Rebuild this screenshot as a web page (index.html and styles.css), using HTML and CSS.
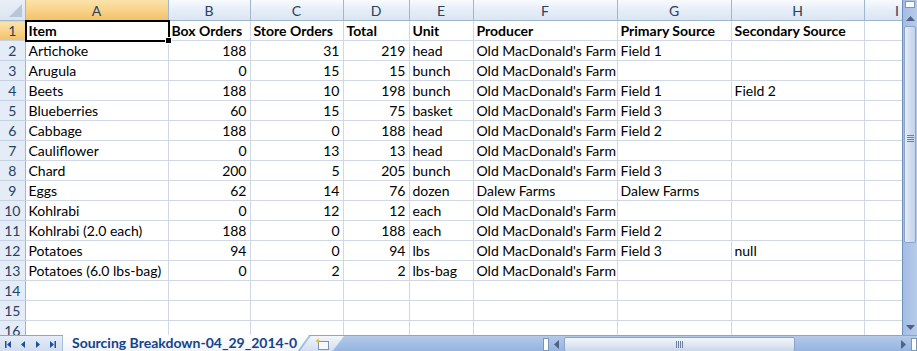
FILE: index.html
```html
<!DOCTYPE html>
<html lang="en">
<head>
    <meta charset="UTF-8">
    <title>Sourcing Breakdown</title>
    <link rel="stylesheet" href="styles.css">
</head>
<body>
    <div class="window">
        <div class="main">
            <div class="sheet">
                <table class="grid">
                    <colgroup>
                        <col class="c-row"><col class="c-a"><col class="c-b"><col class="c-c"><col class="c-d">
                        <col class="c-e"><col class="c-f"><col class="c-g"><col class="c-h"><col class="c-i">
                    </colgroup>
                    <thead>
                        <tr>
                            <th class="corner"><span class="tri"></span></th>
                            <th class="sel">A</th><th>B</th><th>C</th><th>D</th><th>E</th><th>F</th><th>G</th><th>H</th><th class="cut">I</th>
                        </tr>
                    </thead>
                    <tbody>
                        <tr class="bold"><th class="sel">1</th><td class="active">Item<span class="handle"></span></td><td>Box Orders</td><td>Store Orders</td><td>Total</td><td>Unit</td><td>Producer</td><td>Primary Source</td><td>Secondary Source</td><td></td></tr>
                        <tr><th>2</th><td>Artichoke</td><td class="n">188</td><td class="n">31</td><td class="n">219</td><td>head</td><td>Old MacDonald's Farm</td><td>Field 1</td><td></td><td></td></tr>
                        <tr><th>3</th><td>Arugula</td><td class="n">0</td><td class="n">15</td><td class="n">15</td><td>bunch</td><td>Old MacDonald's Farm</td><td></td><td></td><td></td></tr>
                        <tr><th>4</th><td>Beets</td><td class="n">188</td><td class="n">10</td><td class="n">198</td><td>bunch</td><td>Old MacDonald's Farm</td><td>Field 1</td><td>Field 2</td><td></td></tr>
                        <tr><th>5</th><td>Blueberries</td><td class="n">60</td><td class="n">15</td><td class="n">75</td><td>basket</td><td>Old MacDonald's Farm</td><td>Field 3</td><td></td><td></td></tr>
                        <tr><th>6</th><td>Cabbage</td><td class="n">188</td><td class="n">0</td><td class="n">188</td><td>head</td><td>Old MacDonald's Farm</td><td>Field 2</td><td></td><td></td></tr>
                        <tr><th>7</th><td>Cauliflower</td><td class="n">0</td><td class="n">13</td><td class="n">13</td><td>head</td><td>Old MacDonald's Farm</td><td></td><td></td><td></td></tr>
                        <tr><th>8</th><td>Chard</td><td class="n">200</td><td class="n">5</td><td class="n">205</td><td>bunch</td><td>Old MacDonald's Farm</td><td>Field 3</td><td></td><td></td></tr>
                        <tr><th>9</th><td>Eggs</td><td class="n">62</td><td class="n">14</td><td class="n">76</td><td>dozen</td><td>Dalew Farms</td><td>Dalew Farms</td><td></td><td></td></tr>
                        <tr><th>10</th><td>Kohlrabi</td><td class="n">0</td><td class="n">12</td><td class="n">12</td><td>each</td><td>Old MacDonald's Farm</td><td></td><td></td><td></td></tr>
                        <tr><th>11</th><td>Kohlrabi (2.0 each)</td><td class="n">188</td><td class="n">0</td><td class="n">188</td><td>each</td><td>Old MacDonald's Farm</td><td>Field 2</td><td></td><td></td></tr>
                        <tr><th>12</th><td>Potatoes</td><td class="n">94</td><td class="n">0</td><td class="n">94</td><td>lbs</td><td>Old MacDonald's Farm</td><td>Field 3</td><td>null</td><td></td></tr>
                        <tr><th>13</th><td>Potatoes (6.0 lbs-bag)</td><td class="n">0</td><td class="n">2</td><td class="n">2</td><td>lbs-bag</td><td>Old MacDonald's Farm</td><td></td><td></td><td></td></tr>
                        <tr><th>14</th><td></td><td></td><td></td><td></td><td></td><td></td><td></td><td></td><td></td></tr>
                        <tr><th>15</th><td></td><td></td><td></td><td></td><td></td><td></td><td></td><td></td><td></td></tr>
                        <tr><th>16</th><td></td><td></td><td></td><td></td><td></td><td></td><td></td><td></td><td></td></tr>
                    </tbody>
                </table>
            </div>
            <div class="vscroll">
                <div class="split-v"></div>
                <div class="sbtn"><svg width="9" height="5" viewBox="0 0 9 5"><path d="M0 5 L4.5 0 L9 5 Z" fill="#4f6283"/></svg></div>
                <div class="vthumb"><span class="grip-v"></span></div>
                <div class="vtrack"></div>
                <div class="sbtn"><svg width="9" height="5" viewBox="0 0 9 5"><path d="M0 0 L4.5 5 L9 0 Z" fill="#4f6283"/></svg></div>
            </div>
        </div>
        <div class="tabbar">
            <div class="nav">
                <svg width="60" height="16" viewBox="0 0 60 16">
                    <rect x="5" y="5" width="1.5" height="7" fill="#1f4e9c"/>
                    <path d="M11 5 L7 8.5 L11 12 Z" fill="#1f4e9c"/>
                    <path d="M25 5 L21 8.5 L25 12 Z" fill="#1f4e9c"/>
                    <path d="M36 5 L40 8.5 L36 12 Z" fill="#1f4e9c"/>
                    <path d="M50 5 L54 8.5 L50 12 Z" fill="#1f4e9c"/>
                    <rect x="54.5" y="5" width="1.5" height="7" fill="#1f4e9c"/>
                </svg>
            </div>
            <div class="tab">Sourcing Breakdown-04_29_2014-0</div>
            <div class="newtab">
                <svg width="18" height="14" viewBox="0 0 18 14">
                    <rect x="5.5" y="4.5" width="10" height="8" fill="#f4f7fb" stroke="#7f93b1"/>
                    <path d="M5 1 L5.8 3.2 L8 4 L5.8 4.8 L5 7 L4.2 4.8 L2 4 L4.2 3.2 Z" fill="#f2b31a"/>
                </svg>
            </div>
            <div class="hbar">
                <div class="split-h"></div>
                <div class="hbtn"><svg width="5" height="9" viewBox="0 0 5 9"><path d="M5 0 L0 4.5 L5 9 Z" fill="#4f6283"/></svg></div>
                <div class="hthumb"><span class="grip-h"></span></div>
                <div class="htrack"></div>
                <div class="hbtn"><svg width="5" height="9" viewBox="0 0 5 9"><path d="M0 0 L5 4.5 L0 9 Z" fill="#4f6283"/></svg></div>
                <div class="split-h"></div>
            </div>
        </div>
    </div>
</body>
</html>
```
FILE: styles.css
```css
body {
    margin: 0;
    padding: 0;
    background-color: #fff;
    font-family: Lato, "Open Sans", sans-serif;
    color: #000;
}

.window {
    width: 917px;
    height: 351px;
    display: flex;
    flex-direction: column;
    overflow: hidden;
}

.main {
    height: 335px;
    display: flex;
}

.sheet {
    width: 902px;
    overflow: hidden;
}

.grid {
    border-collapse: collapse;
    table-layout: fixed;
    width: 902px;
    font-size: 14px;
}

.c-row { width: 25px; }
.c-a { width: 143px; }
.c-b { width: 82px; }
.c-c { width: 93px; }
.c-d { width: 66px; }
.c-e { width: 64px; }
.c-f { width: 144px; }
.c-g { width: 114px; }
.c-h { width: 133px; }
.c-i { width: 38px; }

.grid th {
    font-weight: normal;
    color: #27415f;
    font-size: 14px;
    padding: 0;
    border: 1px solid #9eb6ce;
}

.grid thead th {
    height: 20px;
    background: linear-gradient(#f8fafd, #e4ecf7 55%, #dbe5f1);
    border-top: none;
    text-align: center;
}

.grid thead th.cut {
    border-right: none;
    text-align: right;
    padding-right: 3px;
}

.grid thead th.sel {
    background: linear-gradient(#fbe3a9, #f8d38a 50%, #f3c16a);
    border-color: #f2b45f #9eb6ce #f2a13b #9eb6ce;
}

.grid .corner {
    position: relative;
    background: linear-gradient(#e9eff7, #dbe5f1);
    border-left: none;
}

.tri {
    position: absolute;
    right: 3px;
    bottom: 3px;
    width: 0;
    height: 0;
    border-left: 13px solid transparent;
    border-bottom: 13px solid #b9c6d8;
}

.grid tbody th {
    height: 19px;
    background-color: #e4ecf7;
    border-left: none;
    border-bottom-color: #c5d2e3;
    border-right-color: #9eb6ce;
    text-align: center;
}

.grid tbody th.sel {
    background: linear-gradient(#fbe3a9, #f8d38a 50%, #f3c16a);
    border-right-color: #f2a13b;
}

.grid td {
    height: 19px;
    padding: 0 3px;
    border: 1px solid #d0d7e5;
    white-space: nowrap;
    overflow: hidden;
    line-height: 19px;
}

.grid td:last-child {
    border-right: none;
}

.grid td.n {
    text-align: right;
}

.bold td {
    font-weight: bold;
}

.grid td.active {
    position: relative;
    overflow: visible;
}

.grid td.active::after {
    content: "";
    position: absolute;
    left: -1px;
    top: -1px;
    right: -2px;
    bottom: -2px;
    border: 2px solid #000;
}

.handle {
    position: absolute;
    right: -4px;
    bottom: -4px;
    width: 5px;
    height: 5px;
    background-color: #000;
    border: 1px solid #fff;
    z-index: 2;
}

/* vertical scroll bar */
.vscroll {
    width: 15px;
    display: flex;
    flex-direction: column;
    background: linear-gradient(90deg, #a3bde3, #b6cbea);
    border-left: 1px solid #6f8fbd;
    box-sizing: border-box;
}

.split-v {
    height: 5px;
    margin: 1px 2px 2px;
    background-color: #fff;
    border: 1px solid #7b95bd;
}

.sbtn {
    height: 16px;
    display: flex;
    align-items: center;
    justify-content: center;
}

.vthumb {
    height: 215px;
    margin: 0 1px;
    border: 1px solid #8ca4c8;
    border-radius: 2px;
    background: linear-gradient(90deg, #e6edf7, #d2deef 50%, #c3d3ea);
    display: flex;
    align-items: flex-end;
    justify-content: center;
}

.grip-v {
    width: 7px;
    height: 7px;
    margin-bottom: 100px;
    background: repeating-linear-gradient(#6b7f9f 0 1px, transparent 1px 2px);
}

.vtrack {
    flex: 1;
}

/* sheet tabs and horizontal scroll bar */
.tabbar {
    height: 16px;
    display: flex;
    background: linear-gradient(#b3cae9, #93b2de);
    border-top: 1px solid #8aa6cd;
    font-size: 14px;
}

.nav {
    width: 62px;
    background: linear-gradient(#e4edf8, #cfdcee);
    border-right: 1px solid #a9bedb;
}

.nav svg {
    display: block;
}

.tab {
    width: 246px;
    padding-left: 9px;
    box-sizing: border-box;
    background: linear-gradient(#ffffff, #eef3fa);
    color: #15428b;
    font-weight: bold;
    line-height: 15px;
    clip-path: polygon(0 0, 100% 0, calc(100% - 12px) 100%, 0 100%);
    margin-top: -1px;
}

.newtab {
    width: 45px;
    margin-left: -10px;
    background: linear-gradient(#f3f6fb, #cfdcef);
    clip-path: polygon(0 100%, 12px 0, 100% 0, calc(100% - 12px) 100%);
    display: flex;
    align-items: center;
    justify-content: center;
}

.hbar {
    flex: 1;
    display: flex;
    align-items: center;
    padding-left: 199px;
}

.split-h {
    width: 4px;
    height: 11px;
    background-color: #fff;
    border: 1px solid #7b95bd;
}

.hbtn {
    width: 15px;
    display: flex;
    justify-content: center;
}

.hthumb {
    width: 229px;
    height: 13px;
    border: 1px solid #8ca4c8;
    border-radius: 2px;
    background: linear-gradient(#f2f6fb, #dfe7f3 50%, #c9d7ea);
    display: flex;
    justify-content: center;
    align-items: center;
}

.grip-h {
    width: 7px;
    height: 7px;
    background: repeating-linear-gradient(90deg, #6b7f9f 0 1px, transparent 1px 2px);
}

.htrack {
    flex: 1;
}
```
